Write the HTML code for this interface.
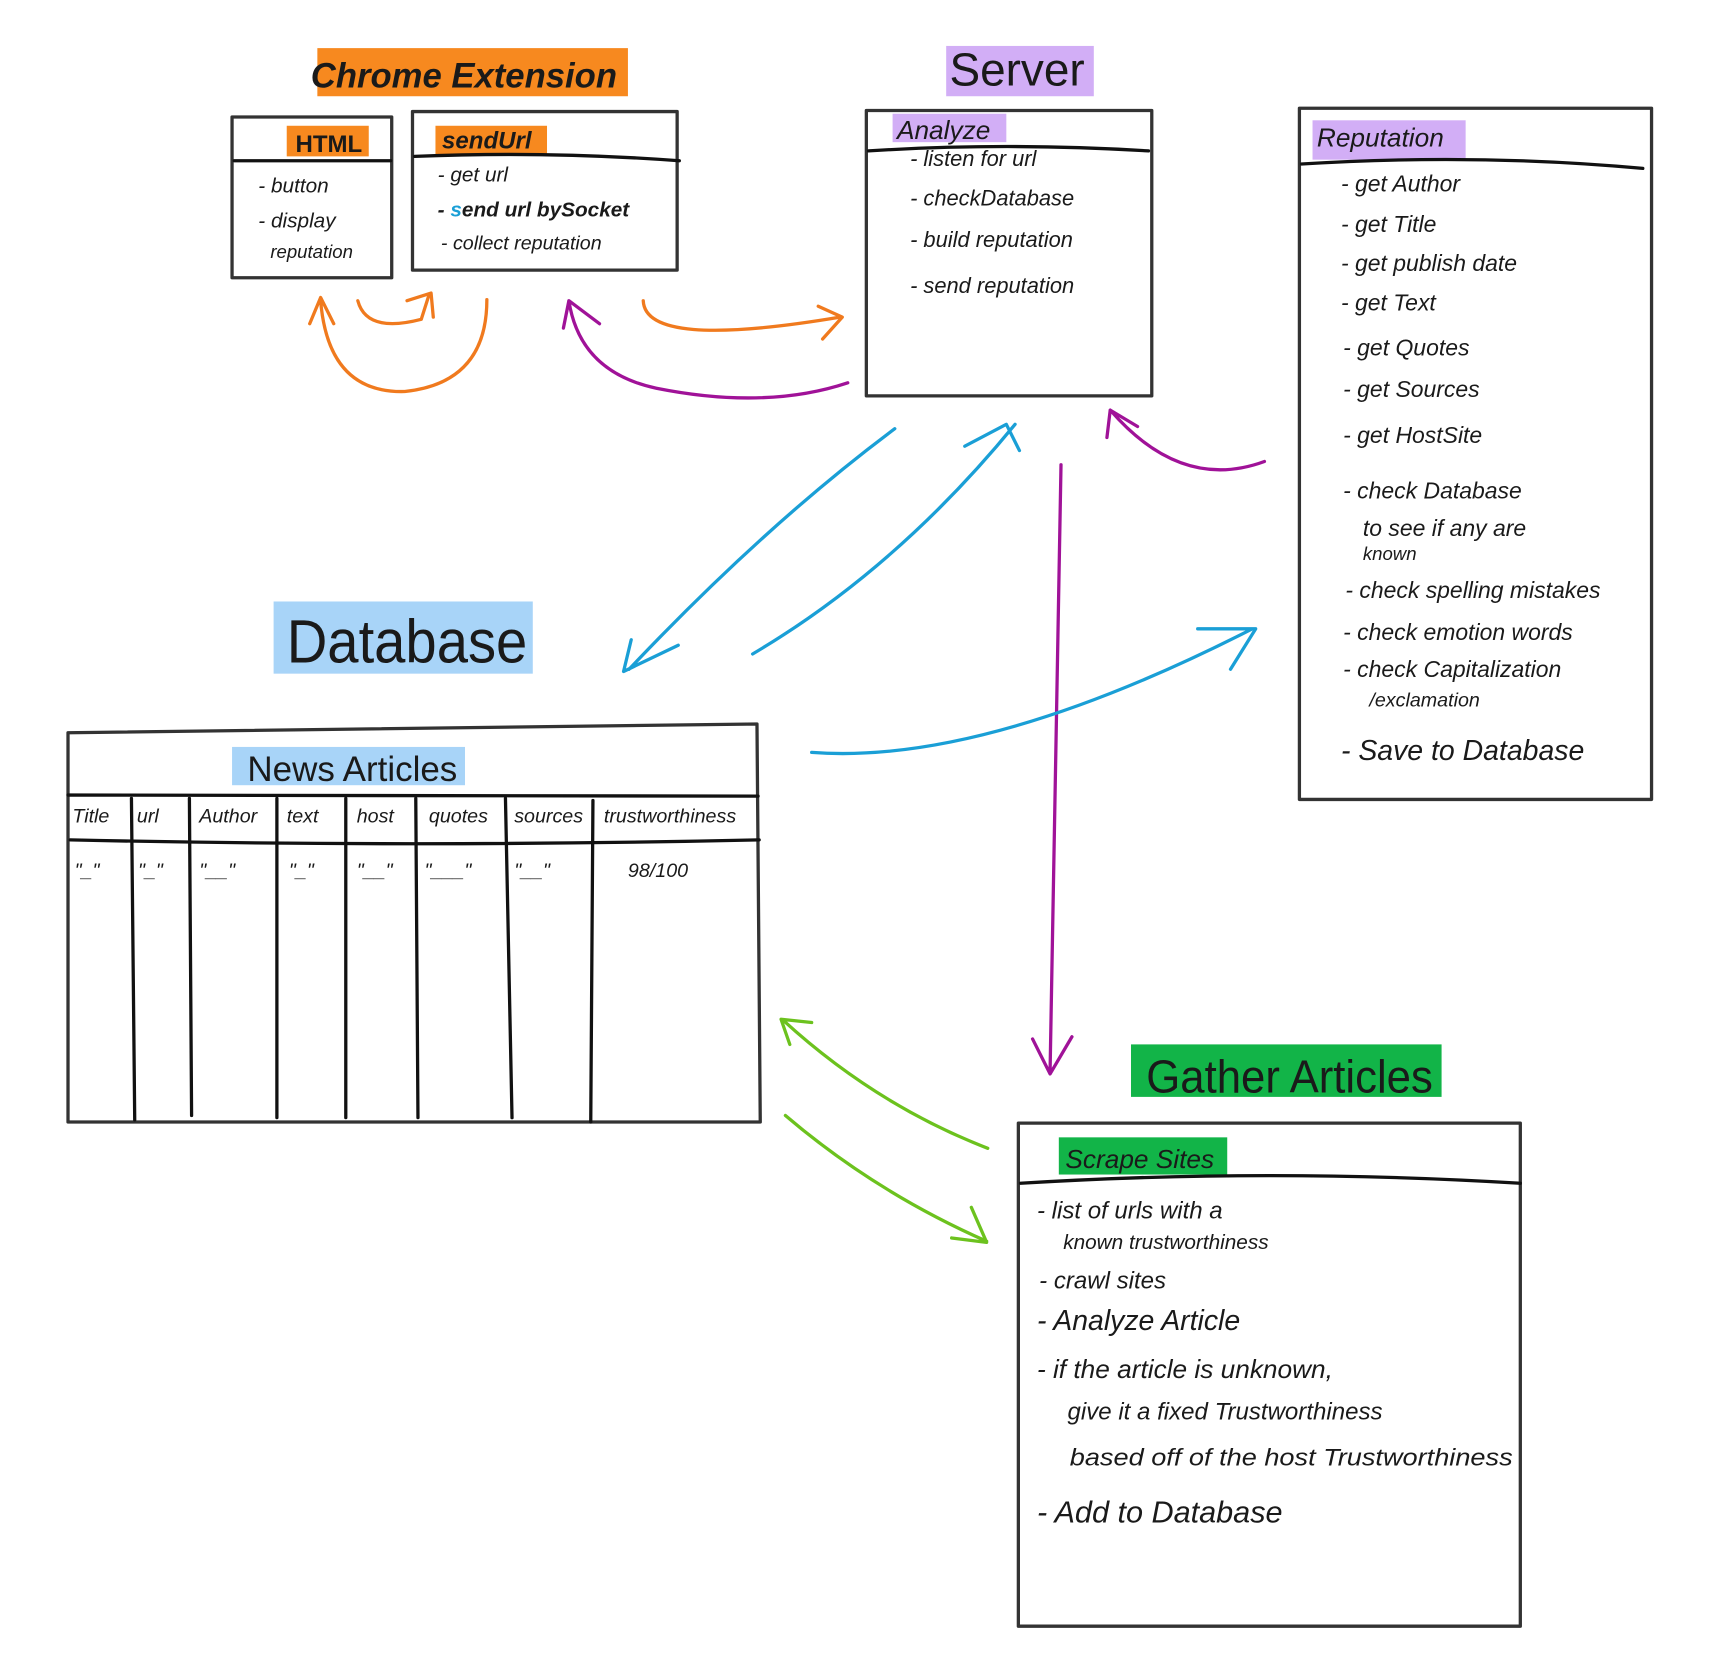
<!DOCTYPE html>
<html><head><meta charset="utf-8"><style>
html,body{margin:0;padding:0;background:#fff;width:1713px;height:1659px;overflow:hidden}
svg{display:block}
text{font-family:"Liberation Sans",sans-serif;fill:#1a1a1a}
</style></head><body>
<svg width="1713" height="1659" viewBox="0 0 1566 1517" xmlns="http://www.w3.org/2000/svg">
<g fill="none" stroke-linecap="round" stroke-linejoin="round">
<rect x="290" y="44" width="284" height="44" fill="#f7891f" stroke="none"/>
<rect x="262" y="115" width="75" height="28" fill="#f7891f" stroke="none"/>
<rect x="398" y="115" width="102" height="26" fill="#f7891f" stroke="none"/>
<rect x="865" y="42" width="135" height="46" fill="#d2aef6" stroke="none"/>
<rect x="816" y="104" width="104" height="26" fill="#d2aef6" stroke="none"/>
<rect x="1200" y="110" width="140" height="36" fill="#d2aef6" stroke="none"/>
<rect x="250" y="550" width="237" height="66" fill="#a8d4f8" stroke="none"/>
<rect x="212" y="683" width="213" height="35" fill="#a8d4f8" stroke="none"/>
<rect x="1034" y="955" width="284" height="48" fill="#12b448" stroke="none"/>
<rect x="968" y="1040" width="154" height="34" fill="#12b448" stroke="none"/>

<g stroke="#333" stroke-width="3">
<rect x="212" y="107" width="146" height="147"/>
<rect x="377" y="102" width="242" height="145"/>
<rect x="792" y="101" width="261" height="261"/>
<rect x="1188" y="99" width="322" height="632"/>
<path d="M62 670 L692 662 L695 1026 L62 1026 Z"/>
<rect x="931" y="1027" width="459" height="460"/>
</g>
<g stroke="#111" stroke-width="3">
<path d="M214 147 L357 147"/>
<path d="M379 143 Q500 138 621 147"/>
<path d="M794 138 Q920 130 1050 138"/>
<path d="M1190 150 Q1350 140 1502 154"/>
<path d="M62 727 L693 728"/>
<path d="M64 768 Q380 775 694 768"/>
<path d="M933 1082 Q1160 1068 1390 1082"/>
<path d="M120 730 L123 1024 M173 730 L175 1020 M253 730 L253 1022 M316 730 L316 1022 M380 730 L382 1022 M462 730 L468 1022 M542 732 L540 1026"/>
</g>

<g stroke="#f07a1e" stroke-width="3">
<path d="M445 274 Q445 350 370 358 Q300 360 293 275 M283 296 L293 272 L305 296"/>
<path d="M327 275 Q335 305 385 292 L392 270 M372 275 L394 268 L396 290"/>
<path d="M588 275 Q590 320 768 290 M748 280 L770 290 L752 310"/>
</g>
<g stroke="#a01298" stroke-width="3">
<path d="M775 350 Q700 375 600 355 Q530 340 520 275 M515 300 L520 275 L548 296"/>
<path d="M970 425 L960 980 M944 950 L960 982 L980 948"/>
<path d="M1156 422 Q1080 450 1015 375 M1012 400 L1015 375 L1040 390"/>
</g>
<g stroke="#1a9fd6" stroke-width="3">
<path d="M818 392 Q700 480 575 612 M577 585 L570 614 L620 590"/>
<path d="M688 598 Q820 520 928 388 M882 408 L920 388 L932 412"/>
<path d="M742 688 Q900 700 1145 575 M1095 575 L1148 575 L1125 612"/>
</g>
<g stroke="#6cc21e" stroke-width="3">
<path d="M903 1050 Q800 1010 716 933 M742 935 L714 932 L722 955"/>
<path d="M718 1020 Q800 1090 902 1135 M870 1132 L902 1136 L888 1104"/>
</g>
</g>

<text x="284" y="80" font-size="32" font-weight="bold" font-style="italic" textLength="280" lengthAdjust="spacingAndGlyphs">Chrome Extension</text>
<text x="270" y="139" font-size="22" font-weight="bold">HTML</text>
<text x="404" y="136" font-size="22" font-weight="bold" font-style="italic">sendUrl</text>
<g font-size="19" font-style="italic">
<text x="236" y="176">- button</text>
<text x="236" y="208">- display</text>
<text x="247" y="236" font-size="17">reputation</text>
<text x="400" y="166">- get url</text>
<text x="400" y="198" font-weight="bold">- <tspan style="fill:#1a9fd6">s</tspan>end url bySocket</text>
<text x="403" y="228" font-size="18">- collect reputation</text>
</g>
<text x="868" y="78" font-size="42">Server</text>
<text x="820" y="127" font-size="24" font-style="italic">Analyze</text>
<g font-size="20" font-style="italic">
<text x="832" y="152">- listen for url</text>
<text x="832" y="188">- checkDatabase</text>
<text x="832" y="226">- build reputation</text>
<text x="832" y="268">- send reputation</text>
</g>
<text x="1204" y="134" font-size="24" font-style="italic">Reputation</text>
<g font-size="21" font-style="italic">
<text x="1226" y="175">- get Author</text>
<text x="1226" y="212">- get Title</text>
<text x="1226" y="248">- get publish date</text>
<text x="1226" y="284">- get Text</text>
<text x="1228" y="325">- get Quotes</text>
<text x="1228" y="363">- get Sources</text>
<text x="1228" y="405">- get HostSite</text>
<text x="1228" y="456">- check Database</text>
<text x="1246" y="490">to see if any are</text>
<text x="1246" y="512" font-size="17">known</text>
<text x="1230" y="547">- check spelling mistakes</text>
<text x="1228" y="585">- check emotion words</text>
<text x="1228" y="619">- check Capitalization</text>
<text x="1252" y="646" font-size="18">/exclamation</text>
<text x="1226" y="695" font-size="26">- Save to Database</text>
</g>
<text x="262" y="606" font-size="56" textLength="220" lengthAdjust="spacingAndGlyphs">Database</text>
<text x="226" y="714" font-size="32">News Articles</text>
<g font-size="18" font-style="italic">
<text x="66" y="752">Title</text><text x="125" y="752">url</text><text x="182" y="752">Author</text><text x="262" y="752">text</text><text x="326" y="752">host</text><text x="392" y="752">quotes</text><text x="470" y="752">sources</text><text x="552" y="752">trustworthiness</text>
<text x="68" y="802">"_"</text><text x="126" y="802">"_"</text><text x="182" y="802">"__"</text><text x="264" y="802">"_"</text><text x="326" y="802">"__"</text><text x="388" y="802">"___"</text><text x="470" y="802">"__"</text><text x="574" y="802">98/100</text>
</g>
<text x="1048" y="999" font-size="42" textLength="262" lengthAdjust="spacingAndGlyphs">Gather Articles</text>
<text x="974" y="1068" font-size="24" font-style="italic">Scrape Sites</text>
<g font-size="22" font-style="italic">
<text x="948" y="1114">- list of urls with a</text>
<text x="972" y="1142" font-size="19">known trustworthiness</text>
<text x="950" y="1178">- crawl sites</text>
<text x="948" y="1216" font-size="26">- Analyze Article</text>
<text x="948" y="1260" font-size="24">- if the article is unknown,</text>
<text x="976" y="1298">give it a fixed Trustworthiness</text>
<text x="978" y="1340" textLength="405" lengthAdjust="spacingAndGlyphs">based off of the host Trustworthiness</text>
<text x="948" y="1392" font-size="28">- Add to Database</text>
</g>
</svg>
</body></html>
